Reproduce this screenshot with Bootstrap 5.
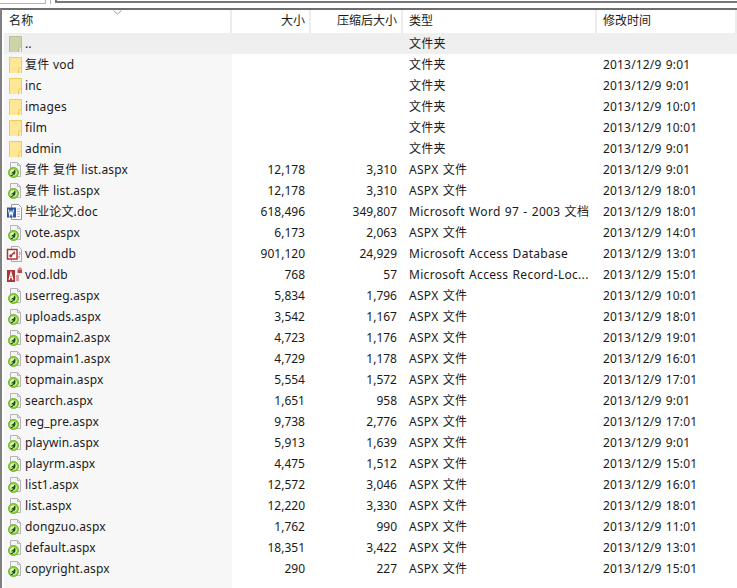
<!DOCTYPE html>
<html lang="zh"><head><meta charset="utf-8"><title>文件</title>
<link href="https://cdn.jsdelivr.net/npm/bootstrap@5.3.0/dist/css/bootstrap.min.css" rel="stylesheet">
<style>
html,body{height:100%;overflow:hidden;background:#fff}
body{font:12px/21px "Noto Sans","Noto Sans CJK SC",sans-serif;color:#1a1a1a}
.fm-top{height:8px}
.fm-t1{width:46px;height:4px;border-bottom:1px solid #b4b4b4;border-right:1px solid #b4b4b4}
.fm-t2{width:5px;height:4px;border-right:1px solid #b4b4b4}
.fm-t3{height:3px;border-left:2px solid #777;border-bottom:2px solid #777;margin-left:4px;flex:1}
.fm-panel{height:580px;border-left:2px solid #808080;border-top:2px solid #6e6e6e;padding-left:2px}
.fm-head{height:23px;line-height:22px;position:relative}
.fm-head .fm-c{border-right:2px solid #ececec;color:#1a1a1a}
.fm-c{white-space:nowrap;overflow:hidden;flex:none}
.fm-n{width:228px;padding-left:5px;letter-spacing:.15px;word-spacing:.5px}
.fm-s{width:79px;padding-right:6px;text-align:right}
.fm-z{width:92px;padding-right:6px;text-align:right}
.fm-head .fm-s,.fm-head .fm-z{padding-right:4px}
.fm-y{width:194px;padding-left:6px;letter-spacing:.3px;word-spacing:.8px}
.fm-d{flex:1 1 0;min-width:0;padding-left:6px;letter-spacing:.17px;word-spacing:1px}
.fm-head .fm-y,.fm-head .fm-d{letter-spacing:0;word-spacing:0}
.fm-row{height:21px;line-height:22px}
.fm-row .fm-n{background:#f7f7f7;display:flex;align-items:center;gap:3px;padding-left:2px}
.fm-row .fm-n svg{flex:none}
.fm-up,.fm-up .fm-n{background:#efefef}
.fm-sort{position:absolute;left:109px;top:0;width:9px;height:5px}
.fm-rest{flex:1;width:228px;background:#f7f7f7}
</style></head><body>
<svg width="0" height="0" class="d-block" aria-hidden="true">
<symbol id="i-f" viewBox="0 0 16 16"><path d="M3.500 .5h12v13h-3v3h-9z" fill="#ffe795" stroke="#eccb57"/><path d="M13 11v5.500h2.500V11z" fill="#fff3c4" stroke="#eccb57"/></symbol>
<symbol id="i-u" viewBox="0 0 16 16"><path d="M3.500 .5h12v13h-3v3h-9z" fill="#ccd3ab" stroke="#bdc08a"/><path d="M13 11v5.500h2.500V11z" fill="#f0f0f0" stroke="#bdc08a"/></symbol>
<symbol id="i-a" viewBox="0 0 16 16"><path d="M4.500 .5h7l3 3v11h-10z" fill="#f4f4f4" stroke="#b5b5b5"/><path d="M11.500 .5v3h3" fill="none" stroke="#b5b5b5"/><circle cx="7.500" cy="10.500" r="5" fill="#8fd13a" stroke="#6fb52a"/><circle cx="7.500" cy="10.500" r="3.300" fill="#e2f3c4"/><path d="M4.800 13.500c2 .3 3.200-1.200 3.900-5.500.5 1.600.3 3-.3 4.500M5.700 11.500c.5-1.300 1.800-1.800 2.800-1.300" fill="none" stroke="#1d4d10" stroke-width="1.200"/></symbol>
<symbol id="i-w" viewBox="0 0 16 16"><path d="M5.500 .5h7l3 3v12h-10z" fill="#fff" stroke="#9a9a9a"/><path d="M11 5h3M11 7.500h3M11 10h3M11 12.500h3" stroke="#a9b9d6"/><rect x="1" y="3.500" width="9" height="10" fill="#2a5699"/><path d="M2.500 5.500l1.200 6 1.300-4 1.300 4 1.200-6" fill="none" stroke="#fff" stroke-width="1.100"/></symbol>
<symbol id="i-m" viewBox="0 0 16 16"><path d="M5.500 .5h7l3 3v12h-10z" fill="#f8f8f8" stroke="#aaa"/><path d="M13 6c1.500 .5 1.500 2.500 0 3M12 11h2" fill="none" stroke="#d66" stroke-width="1"/><rect x="1.500" y="3.500" width="9.500" height="9.500" fill="#fff" stroke="#a8383c" stroke-width="1.500"/><circle cx="4.800" cy="9.800" r="1.600" fill="#a8383c"/><path d="M5.500 9L9 5.800M7.500 7l1.200 1.200" stroke="#a8383c" stroke-width="1.400"/></symbol>
<symbol id="i-l" viewBox="0 0 16 16"><rect x="1" y="3" width="8" height="12" fill="#a4373a"/><path d="M3 13l2-7.500 2 7.500M3.800 10.800h2.400" fill="none" stroke="#fff" stroke-width="1.100"/><rect x="9" y="7" width="5" height="8" fill="#f6eeee"/><path d="M10 9h3M10 11h3M10 13h3" stroke="#b85a5d"/><rect x="11.500" y="2.500" width="5" height="3.500" fill="#c0464c"/><path d="M12.800 2.500V2c0-1.500 2.400-1.500 2.400 0v.5" fill="none" stroke="#c0464c"/></symbol>
</svg>
<div class="fm-top d-flex"><div class="fm-t1"></div><div class="fm-t2"></div><div class="fm-t3"></div></div>
<div class="fm-panel d-flex flex-column">
<div class="fm-head d-flex">
<svg class="fm-sort" viewBox="0 0 9 5"><path d="M.5 .5l4 3.500 4-3.500" fill="none" stroke="#999"/></svg>
<div class="fm-c fm-n">名称</div><div class="fm-c fm-s">大小</div><div class="fm-c fm-z">压缩后大小</div><div class="fm-c fm-y">类型</div><div class="fm-c fm-d">修改时间</div></div>
<div class="fm-row fm-up d-flex"><div class="fm-c fm-n"><svg width="16" height="16"><use href="#i-u"/></svg>..</div><div class="fm-c fm-s"></div><div class="fm-c fm-z"></div><div class="fm-c fm-y">文件夹</div><div class="fm-c fm-d"></div></div>
<div class="fm-row d-flex"><div class="fm-c fm-n"><svg width="16" height="16"><use href="#i-f"/></svg>复件 vod</div><div class="fm-c fm-s"></div><div class="fm-c fm-z"></div><div class="fm-c fm-y">文件夹</div><div class="fm-c fm-d">2013/12/9 9:01</div></div>
<div class="fm-row d-flex"><div class="fm-c fm-n"><svg width="16" height="16"><use href="#i-f"/></svg>inc</div><div class="fm-c fm-s"></div><div class="fm-c fm-z"></div><div class="fm-c fm-y">文件夹</div><div class="fm-c fm-d">2013/12/9 9:01</div></div>
<div class="fm-row d-flex"><div class="fm-c fm-n"><svg width="16" height="16"><use href="#i-f"/></svg>images</div><div class="fm-c fm-s"></div><div class="fm-c fm-z"></div><div class="fm-c fm-y">文件夹</div><div class="fm-c fm-d">2013/12/9 10:01</div></div>
<div class="fm-row d-flex"><div class="fm-c fm-n"><svg width="16" height="16"><use href="#i-f"/></svg>film</div><div class="fm-c fm-s"></div><div class="fm-c fm-z"></div><div class="fm-c fm-y">文件夹</div><div class="fm-c fm-d">2013/12/9 10:01</div></div>
<div class="fm-row d-flex"><div class="fm-c fm-n"><svg width="16" height="16"><use href="#i-f"/></svg>admin</div><div class="fm-c fm-s"></div><div class="fm-c fm-z"></div><div class="fm-c fm-y">文件夹</div><div class="fm-c fm-d">2013/12/9 9:01</div></div>
<div class="fm-row d-flex"><div class="fm-c fm-n"><svg width="16" height="16"><use href="#i-a"/></svg>复件 复件 list.aspx</div><div class="fm-c fm-s">12,178</div><div class="fm-c fm-z">3,310</div><div class="fm-c fm-y">ASPX 文件</div><div class="fm-c fm-d">2013/12/9 9:01</div></div>
<div class="fm-row d-flex"><div class="fm-c fm-n"><svg width="16" height="16"><use href="#i-a"/></svg>复件 list.aspx</div><div class="fm-c fm-s">12,178</div><div class="fm-c fm-z">3,310</div><div class="fm-c fm-y">ASPX 文件</div><div class="fm-c fm-d">2013/12/9 18:01</div></div>
<div class="fm-row d-flex"><div class="fm-c fm-n"><svg width="16" height="16"><use href="#i-w"/></svg>毕业论文.doc</div><div class="fm-c fm-s">618,496</div><div class="fm-c fm-z">349,807</div><div class="fm-c fm-y">Microsoft Word 97 - 2003 文档</div><div class="fm-c fm-d">2013/12/9 18:01</div></div>
<div class="fm-row d-flex"><div class="fm-c fm-n"><svg width="16" height="16"><use href="#i-a"/></svg>vote.aspx</div><div class="fm-c fm-s">6,173</div><div class="fm-c fm-z">2,063</div><div class="fm-c fm-y">ASPX 文件</div><div class="fm-c fm-d">2013/12/9 14:01</div></div>
<div class="fm-row d-flex"><div class="fm-c fm-n"><svg width="16" height="16"><use href="#i-m"/></svg>vod.mdb</div><div class="fm-c fm-s">901,120</div><div class="fm-c fm-z">24,929</div><div class="fm-c fm-y">Microsoft Access Database</div><div class="fm-c fm-d">2013/12/9 13:01</div></div>
<div class="fm-row d-flex"><div class="fm-c fm-n"><svg width="16" height="16"><use href="#i-l"/></svg>vod.ldb</div><div class="fm-c fm-s">768</div><div class="fm-c fm-z">57</div><div class="fm-c fm-y">Microsoft Access Record-Loc...</div><div class="fm-c fm-d">2013/12/9 15:01</div></div>
<div class="fm-row d-flex"><div class="fm-c fm-n"><svg width="16" height="16"><use href="#i-a"/></svg>userreg.aspx</div><div class="fm-c fm-s">5,834</div><div class="fm-c fm-z">1,796</div><div class="fm-c fm-y">ASPX 文件</div><div class="fm-c fm-d">2013/12/9 10:01</div></div>
<div class="fm-row d-flex"><div class="fm-c fm-n"><svg width="16" height="16"><use href="#i-a"/></svg>uploads.aspx</div><div class="fm-c fm-s">3,542</div><div class="fm-c fm-z">1,167</div><div class="fm-c fm-y">ASPX 文件</div><div class="fm-c fm-d">2013/12/9 18:01</div></div>
<div class="fm-row d-flex"><div class="fm-c fm-n"><svg width="16" height="16"><use href="#i-a"/></svg>topmain2.aspx</div><div class="fm-c fm-s">4,723</div><div class="fm-c fm-z">1,176</div><div class="fm-c fm-y">ASPX 文件</div><div class="fm-c fm-d">2013/12/9 19:01</div></div>
<div class="fm-row d-flex"><div class="fm-c fm-n"><svg width="16" height="16"><use href="#i-a"/></svg>topmain1.aspx</div><div class="fm-c fm-s">4,729</div><div class="fm-c fm-z">1,178</div><div class="fm-c fm-y">ASPX 文件</div><div class="fm-c fm-d">2013/12/9 16:01</div></div>
<div class="fm-row d-flex"><div class="fm-c fm-n"><svg width="16" height="16"><use href="#i-a"/></svg>topmain.aspx</div><div class="fm-c fm-s">5,554</div><div class="fm-c fm-z">1,572</div><div class="fm-c fm-y">ASPX 文件</div><div class="fm-c fm-d">2013/12/9 17:01</div></div>
<div class="fm-row d-flex"><div class="fm-c fm-n"><svg width="16" height="16"><use href="#i-a"/></svg>search.aspx</div><div class="fm-c fm-s">1,651</div><div class="fm-c fm-z">958</div><div class="fm-c fm-y">ASPX 文件</div><div class="fm-c fm-d">2013/12/9 9:01</div></div>
<div class="fm-row d-flex"><div class="fm-c fm-n"><svg width="16" height="16"><use href="#i-a"/></svg>reg_pre.aspx</div><div class="fm-c fm-s">9,738</div><div class="fm-c fm-z">2,776</div><div class="fm-c fm-y">ASPX 文件</div><div class="fm-c fm-d">2013/12/9 17:01</div></div>
<div class="fm-row d-flex"><div class="fm-c fm-n"><svg width="16" height="16"><use href="#i-a"/></svg>playwin.aspx</div><div class="fm-c fm-s">5,913</div><div class="fm-c fm-z">1,639</div><div class="fm-c fm-y">ASPX 文件</div><div class="fm-c fm-d">2013/12/9 9:01</div></div>
<div class="fm-row d-flex"><div class="fm-c fm-n"><svg width="16" height="16"><use href="#i-a"/></svg>playrm.aspx</div><div class="fm-c fm-s">4,475</div><div class="fm-c fm-z">1,512</div><div class="fm-c fm-y">ASPX 文件</div><div class="fm-c fm-d">2013/12/9 15:01</div></div>
<div class="fm-row d-flex"><div class="fm-c fm-n"><svg width="16" height="16"><use href="#i-a"/></svg>list1.aspx</div><div class="fm-c fm-s">12,572</div><div class="fm-c fm-z">3,046</div><div class="fm-c fm-y">ASPX 文件</div><div class="fm-c fm-d">2013/12/9 16:01</div></div>
<div class="fm-row d-flex"><div class="fm-c fm-n"><svg width="16" height="16"><use href="#i-a"/></svg>list.aspx</div><div class="fm-c fm-s">12,220</div><div class="fm-c fm-z">3,330</div><div class="fm-c fm-y">ASPX 文件</div><div class="fm-c fm-d">2013/12/9 18:01</div></div>
<div class="fm-row d-flex"><div class="fm-c fm-n"><svg width="16" height="16"><use href="#i-a"/></svg>dongzuo.aspx</div><div class="fm-c fm-s">1,762</div><div class="fm-c fm-z">990</div><div class="fm-c fm-y">ASPX 文件</div><div class="fm-c fm-d">2013/12/9 11:01</div></div>
<div class="fm-row d-flex"><div class="fm-c fm-n"><svg width="16" height="16"><use href="#i-a"/></svg>default.aspx</div><div class="fm-c fm-s">18,351</div><div class="fm-c fm-z">3,422</div><div class="fm-c fm-y">ASPX 文件</div><div class="fm-c fm-d">2013/12/9 13:01</div></div>
<div class="fm-row d-flex"><div class="fm-c fm-n"><svg width="16" height="16"><use href="#i-a"/></svg>copyright.aspx</div><div class="fm-c fm-s">290</div><div class="fm-c fm-z">227</div><div class="fm-c fm-y">ASPX 文件</div><div class="fm-c fm-d">2013/12/9 15:01</div></div>
<div class="fm-rest"></div>
</div>
<script src="https://cdn.jsdelivr.net/npm/bootstrap@5.3.0/dist/js/bootstrap.bundle.min.js"></script>
</body></html>
